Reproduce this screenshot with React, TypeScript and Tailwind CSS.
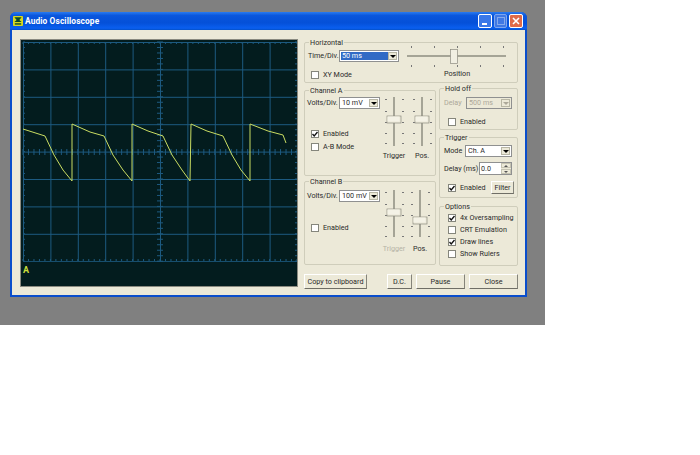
const WAVE =
  "23,129 45,136 54,155 63,170 72,181 72,124 90,132 104,136 113,155 123,170 132,181 132,124 148,131 163,136 172,155 182,170 190,181 191,124 207,131 223,136 232,155 241,170 250,181 250,124 268,131 283,135 286,143";

function Scope() {
  const xs = Array.from({ length: 11 }, (_, i) => 2 + i * 27.4);
  const ys = Array.from({ length: 9 }, (_, i) => 2 + i * 27.4);
  const ticksX = Array.from({ length: 51 }, (_, i) => 2 + i * 5.48);
  const ticksY = Array.from({ length: 41 }, (_, i) => 2 + i * 5.48);
  return (
    <div className="flex h-[248px] w-[278px] shrink-0 flex-col border border-[#8a8a80] bg-[#031c1e]">
      <svg width="276" height="222" className="block shrink-0">
        <g stroke="#1d5a80" strokeWidth="1">
          {xs.map((x) => (
            <line key={x} x1={x + 0.5} x2={x + 0.5} y1="2" y2="221" />
          ))}
          {ys.map((y) => (
            <line key={y} y1={y + 0.5} y2={y + 0.5} x1="2" x2="276" />
          ))}
          {ticksX.map((x) => (
            <g key={x}>
              <line x1={x} x2={x} y1="2" y2="4" />
              <line x1={x} x2={x} y1="109" y2="115" />
              <line x1={x} x2={x} y1="219" y2="221" />
            </g>
          ))}
          {ticksY.map((y) => (
            <g key={y}>
              <line y1={y} y2={y} x1="2" x2="4" />
              <line y1={y} y2={y} x1="136" x2="142" />
              <line y1={y} y2={y} x1="274" x2="276" />
            </g>
          ))}
        </g>
        <polyline
          points={WAVE}
          transform="translate(-21,-40)"
          fill="none"
          stroke="#c9dc62"
          strokeWidth="1"
        />
      </svg>
      <div className="pl-[2px] pt-[3px] text-[9px] font-bold leading-[11px] text-[#c9dc3c]">A</div>
    </div>
  );
}

function Group({ label, className, children }: { label: string; className: string; children?: React.ReactNode }) {
  return (
    <div className={`relative rounded-[2px] border border-[#cfcdbb] ${className}`}>
      <span className="absolute left-[4px] top-[-5px] bg-[#ece9d8] px-[1px] leading-[9px] text-[#2a2a2a]">{label}</span>
      {children}
    </div>
  );
}

function Combo({ value, className, selected, disabled }: { value: string; className: string; selected?: boolean; disabled?: boolean }) {
  return (
    <div
      className={`flex h-[12px] items-center border border-[#8f9090] p-[1px] ${disabled ? "bg-[#ece9d8] text-[#aca899]" : "bg-white"} ${className}`}
    >
      <span className={`flex h-full min-w-0 flex-1 items-center whitespace-nowrap pl-[1px] ${selected ? "bg-[#316ac5] text-white" : ""}`}>
        {value}
      </span>
      <span className="flex h-full w-[9px] shrink-0 items-center justify-center border border-[#b8b6a4] bg-[#ece9d8]">
        <span className={`h-0 w-0 border-x-[3px] border-t-[3px] border-x-transparent ${disabled ? "border-t-[#aca899]" : "border-t-black"}`} />
      </span>
    </div>
  );
}

function Check({ label, checked, className }: { label: string; checked?: boolean; className?: string }) {
  return (
    <div className={`flex items-center gap-[4px] ${className ?? ""}`}>
      <span className="flex h-[8px] w-[8px] shrink-0 items-center justify-center border border-[#85867c] bg-white">
        {checked && (
          <svg width="6" height="6" viewBox="0 0 6 6">
            <path d="M0.5 3 L2.2 5 L5.5 1" fill="none" stroke="#111" strokeWidth="1.3" />
          </svg>
        )}
      </span>
      <span className="whitespace-nowrap">{label}</span>
    </div>
  );
}

function Button({ label, className }: { label: string; className: string }) {
  return (
    <div
      className={`flex h-[15px] items-center justify-center whitespace-nowrap border-t border-l border-t-white border-l-white border-r border-b border-r-[#85847a] border-b-[#6f6e66] bg-[#ece9d8] ${className}`}
    >
      {label}
    </div>
  );
}

function VSlider({ height, thumb, width = 28 }: { height: number; thumb: number; width?: number }) {
  const ticks = [2, 14, 25, 36, 46];
  const mid = width / 2;
  return (
    <svg width={width} height={height} className="block">
      {ticks.map((y) => (
        <g key={y} fill="#777">
          <rect x={mid - 9} y={y} width="2" height="1" />
          <rect x={mid + 8} y={y} width="2" height="1" />
        </g>
      ))}
      <rect x={mid - 1} y="0" width="2" height={height} fill="#a5a496" />
      <rect x={mid - 7} y={thumb} width="14" height="7" fill="#ece9d8" stroke="#8d8c80" strokeWidth="0.7" />
      <rect x={mid - 6.5} y={thumb + 0.5} width="12" height="5" fill="#f4f2e6" />
    </svg>
  );
}

function HSlider() {
  const ticks = [6, 29, 52, 75, 98];
  return (
    <svg width="104" height="24" className="block">
      {ticks.map((x) => (
        <g key={x} fill="#777">
          <rect x={x} y="2" width="1" height="2" />
          <rect x={x} y="21" width="1" height="2" />
        </g>
      ))}
      <rect x="2" y="11" width="99" height="2" fill="#a5a496" />
      <rect x="45.5" y="5.5" width="7" height="14" fill="#f1efe2" stroke="#8d8c80" strokeWidth="0.7" />
    </svg>
  );
}

function TitleBar() {
  return (
    <div className="flex h-[18px] items-center rounded-t-[6px] bg-[linear-gradient(180deg,#2a7bf0_0%,#0a56dd_20%,#0450d8_60%,#0a5ff0_90%,#0350c8_100%)] pl-[3px] pr-[4px]">
      <svg width="10" height="10" viewBox="0 0 11 11" className="shrink-0">
        <rect width="11" height="11" rx="1" fill="#d8d820" />
        <path d="M1.5 1.5 L9.5 1.5 L7 4.5 L9.5 6.5 L1.5 6.5 L4 4.5 Z" fill="#0c4a2a" />
        <rect x="2" y="8" width="7" height="1.5" fill="#0c4a2a" />
      </svg>
      <span className="ml-[2px] flex-1 text-[8.4px] font-bold tracking-[0.1px] text-white">Audio Oscilloscope</span>
      <div className="flex gap-[2px]">
        <div className="flex h-[14px] w-[14px] items-end rounded-[2px] border border-white bg-[#3a78e8] pb-[2px] pl-[3px]">
          <span className="h-[2px] w-[5px] bg-white" />
        </div>
        <div className="flex h-[14px] w-[13px] items-center justify-center rounded-[2px] border border-[#7ea6ee] bg-[#3f78e4]">
          <span className="h-[8px] w-[8px] border border-[#86aaec]" />
        </div>
        <div className="flex h-[14px] w-[14px] items-center justify-center rounded-[2px] border border-white bg-[#df6a48]">
          <svg width="8" height="8" viewBox="0 0 8 8">
            <path d="M1 1 L7 7 M7 1 L1 7" stroke="#fff" strokeWidth="1.6" />
          </svg>
        </div>
      </div>
    </div>
  );
}

function Label({ children, className }: { children: React.ReactNode; className?: string }) {
  return <span className={`whitespace-nowrap ${className ?? ""}`}>{children}</span>;
}

export default function App() {
  return (
    <div className="h-[455px] w-[700px] overflow-hidden bg-white font-['Roboto',sans-serif] text-[7.2px] leading-[10px] text-[#2a2a2a]">
      <div className="h-[325px] w-[545px] bg-[#808080] pl-[10px] pt-[12px]">
        <div className="h-[285px] w-[517px] rounded-t-[6px] bg-[#0a4ecc]">
          <TitleBar />
          <div className="mx-[2px] h-[265px] w-[513px] bg-[#ece9d8] pl-[8px] pt-[9px]">
            <div className="flex gap-[6px]">
              <Scope />

              <div className="flex w-[214px] flex-col pt-[3px]">
                <Group label="Horizontal" className="h-[41px] w-[214px]">
                  <div className="flex pl-[3px] pt-[1px]">
                    <div className="w-[97px]">
                      <div className="flex items-center pt-[6px]">
                        <Label className="w-[31px]">Time/Div.</Label>
                        <Combo value="50 ms" selected className="w-[60px]" />
                      </div>
                      <Check label="XY Mode" className="pl-[3px] pt-[8px]" />
                    </div>
                    <div className="flex flex-col items-center">
                      <HSlider />
                      <Label className="mt-[1px]">Position</Label>
                    </div>
                  </div>
                </Group>

                <div className="flex gap-[3px]">
                  <div className="flex flex-col">
                    <Group label="Channel A" className="mt-[7px] h-[86px] w-[132px]">
                      <div className="flex pl-[2px] pt-[6px]">
                        <div className="w-[73px]">
                          <div className="flex items-center">
                            <Label className="w-[32px]">Volts/Div.</Label>
                            <Combo value="10 mV" className="w-[41px]" />
                          </div>
                          <Check label="Enabled" checked className="pl-[4px] pt-[20px]" />
                          <Check label="A-B Mode" className="pl-[4px] pt-[3px]" />
                        </div>
                        <div className="flex flex-col items-center">
                          <VSlider height={49} thumb={19} />
                          <Label className="mt-[5px]">Trigger</Label>
                        </div>
                        <div className="flex flex-col items-center">
                          <VSlider height={49} thumb={19} />
                          <Label className="mt-[5px]">Pos.</Label>
                        </div>
                      </div>
                    </Group>
                    <Group label="Channel B" className="mt-[5px] h-[84px] w-[132px]">
                      <div className="flex pl-[2px] pt-[8px]">
                        <div className="w-[73px]">
                          <div className="flex items-center">
                            <Label className="w-[32px]">Volts/Div.</Label>
                            <Combo value="100 mV" className="w-[41px]" />
                          </div>
                          <Check label="Enabled" className="pl-[4px] pt-[21px]" />
                        </div>
                        <div className="flex flex-col items-center">
                          <VSlider height={47} thumb={19} />
                          <Label className="mt-[7px] text-[#b5b3a5]">Trigger</Label>
                        </div>
                        <div className="ml-[-2px] flex flex-col items-center">
                          <VSlider height={47} thumb={27} />
                          <Label className="mt-[7px]">Pos.</Label>
                        </div>
                      </div>
                    </Group>
                  </div>

                  <div className="flex flex-col">
                    <Group label="Hold off" className="mt-[5px] h-[42px] w-[79px]">
                      <div className="pl-[4px] pt-[8px]">
                        <div className="flex items-center">
                          <Label className="w-[22px] text-[#aca899]">Delay</Label>
                          <Combo value="500 ms" disabled className="w-[46px]" />
                        </div>
                        <Check label="Enabled" className="pl-[4px] pt-[8px]" />
                      </div>
                    </Group>
                    <Group label="Trigger" className="mt-[7px] h-[61px] w-[79px]">
                      <div className="pl-[4px] pt-[7px]">
                        <div className="flex items-center">
                          <Label className="w-[21px]">Mode</Label>
                          <Combo value="Ch. A" className="w-[47px]" />
                        </div>
                        <div className="flex items-center pt-[5px]">
                          <Label className="w-[35px]">Delay (ms)</Label>
                          <div className="flex h-[13px] w-[33px] border border-[#8f9090] bg-white pl-[1px] leading-[11px]">
                            <span className="flex-1">0.0</span>
                            <span className="flex w-[10px] flex-col gap-[1px] bg-[#ece9d8]">
                              <span className="flex flex-1 items-center justify-center border border-[#c5c3b2]">
                                <span className="h-0 w-0 border-x-[2px] border-b-[2px] border-x-transparent border-b-[#555]" />
                              </span>
                              <span className="flex flex-1 items-center justify-center border border-[#c5c3b2]">
                                <span className="h-0 w-0 border-x-[2px] border-t-[2px] border-x-transparent border-t-[#555]" />
                              </span>
                            </span>
                          </div>
                        </div>
                        <div className="flex items-center justify-between pl-[4px] pr-[3px] pt-[6px]">
                          <Check label="Enabled" checked />
                          <Button label="Filter" className="!h-[13px] w-[23px]" />
                        </div>
                      </div>
                    </Group>
                    <Group label="Options" className="mt-[8px] h-[60px] w-[79px]">
                      <div className="flex flex-col gap-[2px] pl-[8px] pt-[6px]">
                        <Check label="4x Oversampling" checked />
                        <Check label="CRT Emulation" />
                        <Check label="Draw lines" checked />
                        <Check label="Show Rulers" />
                      </div>
                    </Group>
                  </div>
                </div>

                <div className="mt-[8px] flex">
                  <Button label="Copy to clipboard" className="w-[63px]" />
                  <Button label="D.C." className="ml-[20px] w-[25px]" />
                  <Button label="Pause" className="ml-[4px] w-[49px]" />
                  <Button label="Close" className="ml-[4px] w-[49px]" />
                </div>
              </div>
            </div>
          </div>
        </div>
      </div>
    </div>
  );
}
